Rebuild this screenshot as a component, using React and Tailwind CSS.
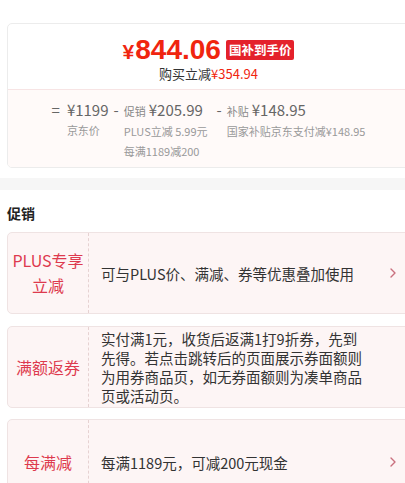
import React from 'react'

const CJK = { fontFamily: '"Noto Sans CJK SC", "Noto Sans", sans-serif' }
const NUM = { fontFamily: '"Liberation Sans", Arial, "Noto Sans CJK SC", sans-serif' }

const PROMOS = [
  { label: ['PLUS专享', '立减'], lines: ['可与PLUS价、满减、券等优惠叠加使用'], arrow: true, h: 'h-[82px]', mt: 'mt-[9px]' },
  {
    label: ['满额返券'],
    lines: ['实付满1元，收货后返满1打9折券，先到', '先得。若点击跳转后的页面展示券面额则', '为用券商品页，如无券面额则为凑单商品', '页或活动页。'],
    arrow: false,
    h: 'h-[82px]',
    mt: 'mt-[12px]',
  },
  { label: ['每满减'], lines: ['每满1189元，可减200元现金'], arrow: true, h: 'h-[86px]', mt: 'mt-[11px]' },
]

function Chevron() {
  return (
    <svg width="8" height="12" viewBox="0 0 8 12" className="flex-shrink-0">
      <polyline points="2,2 6,6 2,10" fill="none" stroke="#c9707e" strokeWidth="1.4" strokeLinecap="round" strokeLinejoin="round" />
    </svg>
  )
}

function PromoCard({ p }) {
  return (
    <div className={`${p.mt} ml-[7px] w-[403px] ${p.h} flex border border-[#efe3e3] rounded-[5px] bg-[#fdf5f5] overflow-hidden`}>
      <div className="w-[81px] flex-shrink-0 flex flex-col items-center justify-center border-r border-dashed border-[#e6d2d2] text-[16px] leading-[25px] text-[#dd3a4e]">
        {p.label.map(l => <span key={l}>{l}</span>)}
      </div>
      <div className="flex-1 flex items-center pl-[12px] pr-[12px]">
        <div className="flex-1 text-[14.5px] leading-[19px] text-[#333]">
          {p.lines.map(l => <div key={l} className="whitespace-nowrap">{l}</div>)}
        </div>
        {p.arrow && <Chevron />}
      </div>
    </div>
  )
}

export default function App() {
  return (
    <div className="w-[405px] h-[483px] overflow-hidden bg-white" style={CJK}>
      <div className="h-[23px]" />

      {/* price card */}
      <div className="ml-[7px] w-[403px] border border-[#ececec] rounded-[5px] overflow-hidden">
        <div className="h-[65px] pt-[11px] flex flex-col items-center">
          <div className="flex items-center h-[30px]">
            <span className="text-[#f0250f] text-[21px] font-bold leading-[30px] mt-[3px] mr-[1px]" style={NUM}>¥</span>
            <span className="text-[#f0250f] text-[28px] font-bold leading-[30px]" style={NUM}>844.06</span>
            <span className="ml-[5px] bg-[#e4212b] text-white text-[12.5px] font-bold leading-[20px] px-[3px] rounded-[2px]">国补到手价</span>
          </div>
          <div className="text-[13px] leading-[18px] text-[#333]">
            购买立减<span className="text-[#f0250f]">¥354.94</span>
          </div>
        </div>
        <div className="h-[78px] border-t border-[#f7e4e4] bg-[#fffaf9] pt-[10px] flex justify-center items-start gap-[5px] text-[#666]">
          <span className="text-[15px] leading-[20px] mr-[2px]">=</span>
          <div className="flex flex-col">
            <span className="text-[15px] leading-[20px]">¥1199</span>
            <span className="text-[11px] leading-[20px] text-[#999]">京东价</span>
          </div>
          <span className="text-[15px] leading-[20px]">-</span>
          <div className="flex flex-col">
            <span className="text-[15px] leading-[20px]"><span className="text-[11px] text-[#888] mr-[3px]">促销</span>¥205.99</span>
            <span className="text-[11px] leading-[20px] text-[#999]">PLUS立减 5.99元</span>
            <span className="text-[11px] leading-[20px] text-[#999]">每满1189减200</span>
          </div>
          <span className="text-[15px] leading-[20px] ml-[4px]">-</span>
          <div className="flex flex-col">
            <span className="text-[15px] leading-[20px]"><span className="text-[11px] text-[#888] mr-[3px]">补贴</span>¥148.95</span>
            <span className="text-[11px] leading-[20px] text-[#999]">国家补贴京东支付减¥148.95</span>
          </div>
        </div>
      </div>

      <div className="mt-[10px] h-[12px] bg-[#f6f6f6]" />

      <div className="mt-[13px] ml-[7px] text-[14px] leading-[20px] font-bold text-[#222]">促销</div>

      {PROMOS.map((p, i) => <PromoCard key={i} p={p} />)}
    </div>
  )
}
